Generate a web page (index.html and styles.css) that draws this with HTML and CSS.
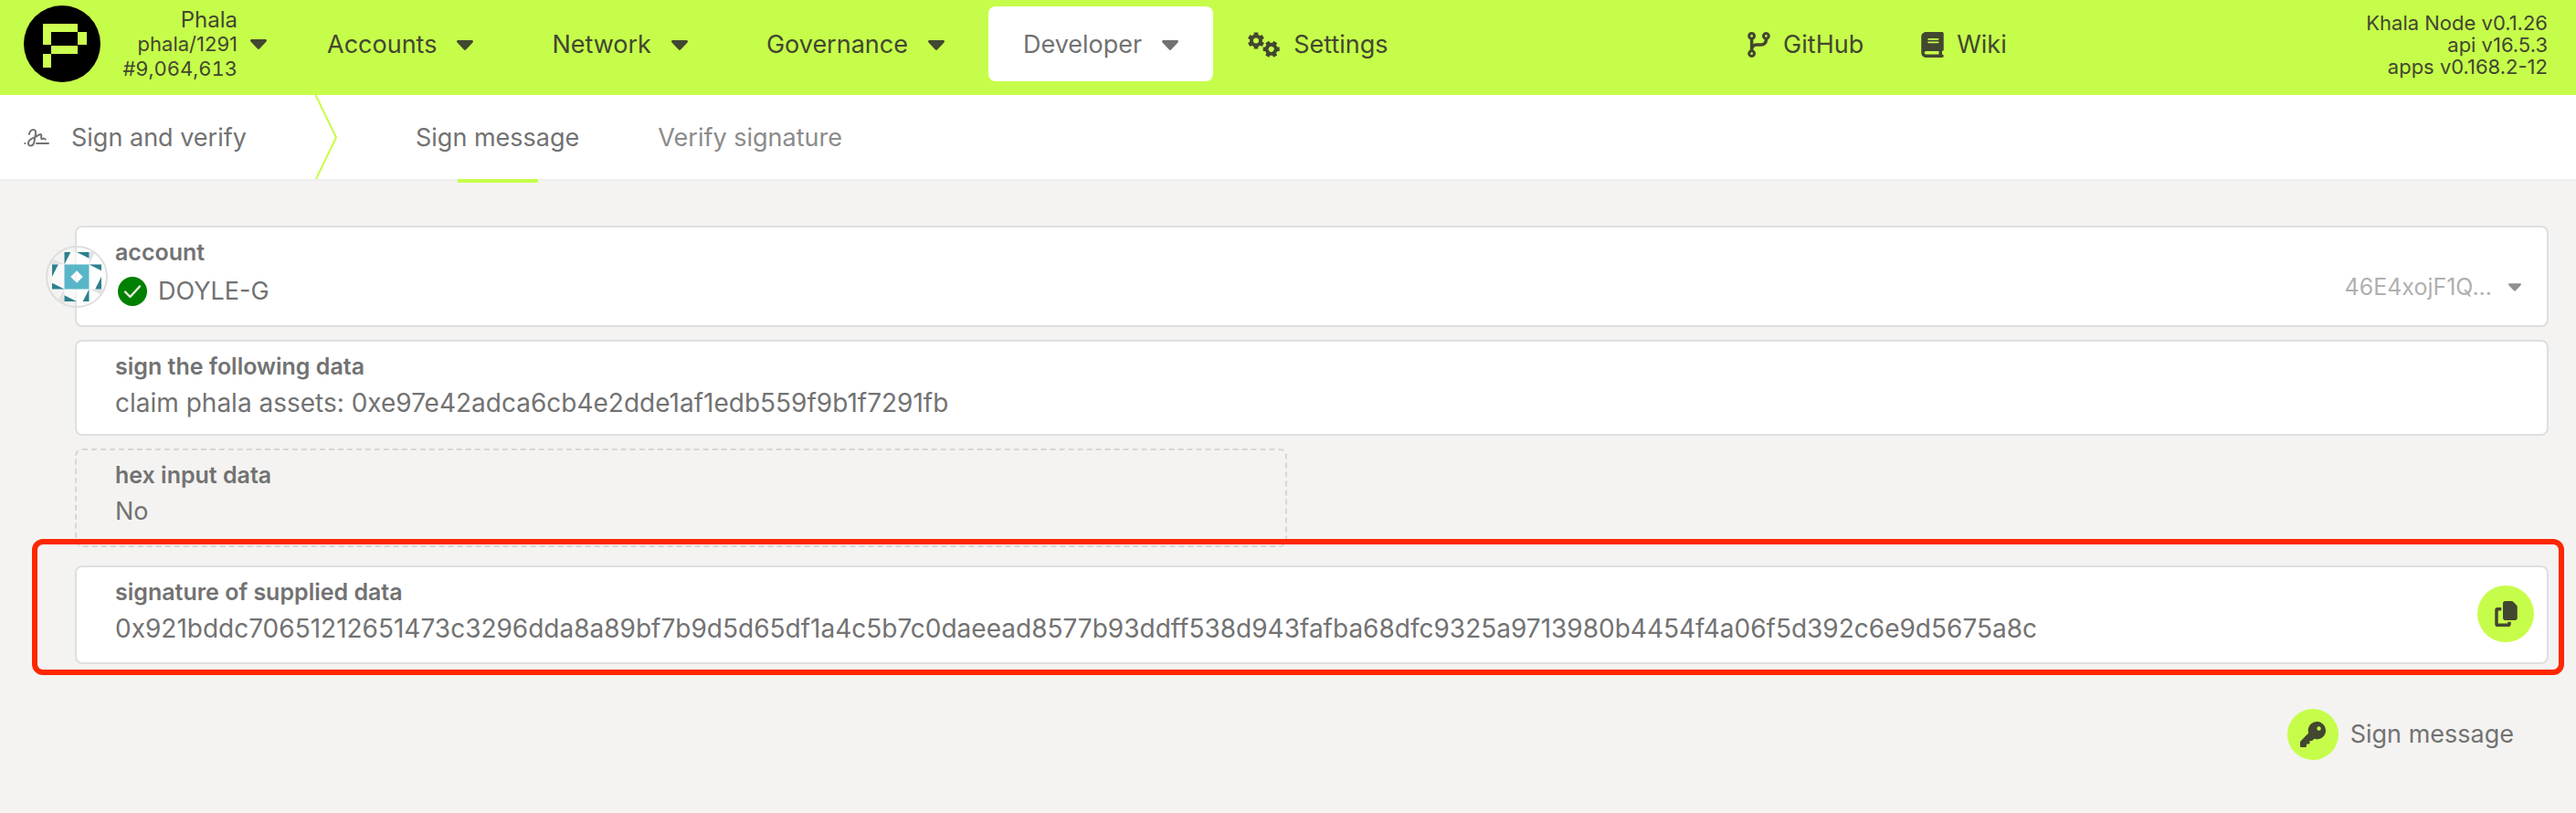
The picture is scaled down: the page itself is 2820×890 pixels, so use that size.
FILE: index.html
```html
<!DOCTYPE html>
<html lang="en">
<head>
<meta charset="utf-8">
<title>Sign and verify</title>
<link rel="stylesheet" href="styles.css">
</head>
<body>
<svg class="defs" aria-hidden="true">
  <symbol id="caret" viewBox="0 0 18 11"><path d="M1.5 0h15c1.3 0 2 1.500 1 2.500l-7.300 7.800a1.700 1.700 0 0 1-2.400 0L.5 2.500C-.5 1.500.2 0 1.500 0z"/></symbol>
</svg>
<header class="topbar">
  <div class="topbar-left">
    <button class="chain" type="button" aria-haspopup="true">
      <svg class="logo" viewBox="0 0 84 84" aria-hidden="true">
        <circle cx="42" cy="42" r="42"/>
        <path fill="#cdff50" d="M21 20h38v9H30v14h-9zM59 29h10v14H59zM30 44h29v9H30zM21 53h9v15h-9z"/>
      </svg>
      <span class="chain-info">
        <span class="chain-name">Phala</span>
        <span>phala/1291</span>
        <span class="block-number">#9,064,613</span>
      </span>
      <svg class="caret" aria-hidden="true"><use href="#caret"/></svg>
    </button>
    <nav class="menu">
      <button class="menu-item" type="button">Accounts<svg class="caret" aria-hidden="true"><use href="#caret"/></svg></button>
      <button class="menu-item" type="button">Network<svg class="caret" aria-hidden="true"><use href="#caret"/></svg></button>
      <button class="menu-item" type="button">Governance<svg class="caret" aria-hidden="true"><use href="#caret"/></svg></button>
      <button class="menu-item is-active" type="button">Developer<svg class="caret" aria-hidden="true"><use href="#caret"/></svg></button>
      <a class="menu-item menu-link" href="#settings">
        <svg class="gears" viewBox="0 0 35 28" aria-hidden="true">
          <g id="gear" transform="translate(9 9.500)" fill="none" stroke="currentColor">
            <circle r="5" stroke-width="4"/>
            <g stroke-width="4.600" stroke-linejoin="round">
              <path d="M0-5V-9"/><path d="M0-5V-9" transform="rotate(60)"/><path d="M0-5V-9" transform="rotate(120)"/>
              <path d="M0-5V-9" transform="rotate(180)"/><path d="M0-5V-9" transform="rotate(240)"/><path d="M0-5V-9" transform="rotate(300)"/>
            </g>
          </g>
          <g transform="translate(25.700 18.800) rotate(30)"><use href="#gear" x="-9" y="-9.500"/></g>
        </svg>
        Settings
      </a>
    </nav>
  </div>
  <nav class="links">
    <a class="link" href="#github">
      <svg class="icon" viewBox="0 0 448 512" aria-hidden="true"><path fill-rule="evenodd" d="M80 0a80 80 0 0 1 32 153.300v87.800c18.800-10.900 40.700-17.100 64-17.100h96c35.300 0 64-28.700 64-64v-6.700a80 80 0 1 1 64 0V160c0 70.700-57.300 128-128 128h-96c-35.300 0-64 28.700-64 64v6.700a80 80 0 1 1-64 0V153.300A80 80 0 0 1 80 0zm0 104a24 24 0 1 0 0-48 24 24 0 1 0 0 48zm288 0a24 24 0 1 0 0-48 24 24 0 1 0 0 48zM80 456a24 24 0 1 0 0-48 24 24 0 1 0 0 48z"/></svg>
      GitHub
    </a>
    <a class="link" href="#wiki">
      <svg class="icon" viewBox="0 0 448 512" aria-hidden="true"><path d="M96 0C43 0 0 43 0 96V416c0 53 43 96 96 96H384h32c17.700 0 32-14.300 32-32s-14.300-32-32-32V384c17.700 0 32-14.300 32-32V32c0-17.700-14.300-32-32-32H384 96zm0 384H352v64H96c-17.700 0-32-14.300-32-32s14.300-32 32-32zm32-240c0-8.800 7.200-16 16-16H336c8.800 0 16 7.200 16 16s-7.200 16-16 16H144c-8.800 0-16-7.200-16-16zm16 48H336c8.800 0 16 7.200 16 16s-7.200 16-16 16H144c-8.800 0-16-7.200-16-16s7.200-16 16-16z"/></svg>
      Wiki
    </a>
  </nav>
  <div class="versions">
    <span>Khala Node v0.1.26</span>
    <span>api v16.5.3</span>
    <span>apps v0.168.2-12</span>
  </div>
</header>

<div class="tabs">
  <div class="section">
    <svg class="signature outline" viewBox="0 0 28 20" aria-hidden="true">
      <path d="M1.200 16h.2M14 16h13M6 6c0-3 2.500-5 4.500-5s3 1.700 2.500 4.500L11.500 14c-.5 3-2 4.600-4 4.600S4.600 17 5 15c.5-3.500 5-4.500 8-6.200 2-1.200 4-2.800 5.500-2.800 1.700 0-.3 5 1.300 5.200.9.100 1.200-.6 2-.6s.7.800 2 .8"/>
    </svg>
    Sign and verify
  </div>
  <svg class="chevron outline" viewBox="0 0 24 92" aria-hidden="true"><path d="M1 1l22 45.500L1 92"/></svg>
  <nav class="tab-list">
    <a class="tab is-active" href="#sign">Sign message</a>
    <a class="tab" href="#verify">Verify signature</a>
  </nav>
</div>

<main class="page">
  <div class="field field-account">
    <svg class="avatar" viewBox="0 0 68 68" aria-hidden="true">
      <clipPath id="disc"><circle cx="34" cy="34" r="32"/></clipPath>
      <g clip-path="url(#disc)">
        <path fill="#e3e3e3" d="M20.500 20.500L2 11v9.500zM47.500 20.500V7L55 5zM20.500 47.500V63l-8-2zM47.500 47.500H66V56z"/>
        <path fill="#fff" fill-opacity=".6" d="M20.500 7h27v13.500H61v27H47.500V61h-27V47.500H7v-27h13.500z"/>
        <path fill="#2c808e" d="M20.500 7h6.800l-6.800 13.500zM34 7h13.500v6.800zM7 20.500h6.800L7 34zM7 40.700v6.800h13.500zM47.500 20.500H61v6.800zM61 34v13.500h-6.800zM20.500 54.200V61H34zM47.500 47.500V61h-6.800z"/>
        <path fill="#59b5c8" fill-rule="evenodd" d="M20.500 20.500h27v27h-27zM34 27.300L27.300 34l6.700 6.700 6.700-6.700z"/>
      </g>
      <circle cx="34" cy="34" r="33" fill="none" stroke="#dedede" stroke-width="2"/>
    </svg>
    <label class="label" for="account">account</label>
    <div class="account-row">
      <svg class="check" viewBox="0 0 32 32" aria-hidden="true"><circle cx="16" cy="16" r="16" fill="#008000"/><path d="M8 16.500l5.500 5.500L24 10.500" fill="none" stroke="#e8efe4" stroke-width="2.400" stroke-linecap="round" stroke-linejoin="round"/></svg>
      <select class="value account-select" id="account"><option>DOYLE-G</option></select>
      <span class="address">46E4xojF1Q...<svg class="caret caret-small" aria-hidden="true"><use href="#caret"/></svg></span>
    </div>
  </div>
  <div class="field">
    <label class="label" for="data">sign the following data</label>
    <input class="value" id="data" type="text" value="claim phala assets: 0xe97e42adca6cb4e2dde1af1edb559f9b1f7291fb">
  </div>
  <div class="field field-static">
    <label class="label" for="hex">hex input data</label>
    <output class="value" id="hex">No</output>
  </div>
  <div class="field field-signature">
    <div class="signature-text">
      <label class="label" for="signature">signature of supplied data</label>
      <input class="value" id="signature" type="text" readonly value="0x921bddc70651212651473c3296dda8a89bf7b9d5d65df1a4c5b7c0daeead8577b93ddff538d943fafba68dfc9325a9713980b4454f4a06f5d392c6e9d5675a8c">
    </div>
    <button class="round copy" type="button" aria-label="Copy signature">
      <svg class="icon" viewBox="0 0 448 512" aria-hidden="true"><path d="M208 0H332.100c12.700 0 24.900 5.100 33.900 14.100l67.900 67.900c9 9 14.100 21.200 14.100 33.900V336c0 26.500-21.500 48-48 48H208c-26.500 0-48-21.500-48-48V48c0-26.500 21.500-48 48-48zM48 128h80v64H64V448H256V416h64v48c0 26.500-21.500 48-48 48H48c-26.500 0-48-21.500-48-48V176c0-26.500 21.500-48 48-48z"/></svg>
    </button>
  </div>
  <div class="actions">
    <button class="action" type="button">
      <span class="round">
        <svg class="key" viewBox="0 0 512 512" aria-hidden="true"><path fill-rule="evenodd" d="M336 352c97.200 0 176-78.800 176-176S433.200 0 336 0S160 78.800 160 176c0 18.700 2.900 36.800 8.300 53.700L7 391c-4.500 4.500-7 10.600-7 17v80c0 13.300 10.700 24 24 24h80c13.300 0 24-10.700 24-24V448h40c13.300 0 24-10.700 24-24V384h40c6.400 0 12.500-2.500 17-7l33.300-33.300c16.900 5.400 35 8.300 53.700 8.300zM376 96a40 40 0 1 1 0 80 40 40 0 1 1 0-80z"/></svg>
      </span>
      Sign message
    </button>
  </div>
</main>
</body>
</html>
```
FILE: styles.css
```css
:root {
  --accent: #c6fd4a;
  --ink: #424730;
  --text: #727272;
  --line: #dedfdf;
  --bg: #f4f3f1;
}

* { box-sizing: border-box; }

body {
  margin: 0;
  background: var(--bg);
  color: var(--text);
  font-family: Inter, "Liberation Sans", sans-serif;
  font-size: 27px;
  line-height: 36px;
}

button, input, select {
  margin: 0;
  padding: 0;
  border: 0;
  background: none;
  color: inherit;
  font: inherit;
}

a { color: inherit; text-decoration: none; }
svg { display: block; flex: none; fill: currentColor; }
.defs { position: absolute; width: 0; height: 0; }
.outline { fill: none; stroke-linecap: round; stroke-linejoin: round; }

.icon { width: 25px; height: 28px; }
.caret { width: 18px; height: 11px; }

/* Top bar */
.topbar {
  display: flex;
  align-items: center;
  justify-content: space-between;
  padding: 6px 31px 14px 26px;
  background: var(--accent);
  color: var(--ink);
}
.topbar-left, .menu, .links { display: flex; align-items: center; }
.chain {
  display: flex;
  align-items: center;
  width: 266px;
  font-size: 22px;
  line-height: 27px;
}
.logo { width: 84px; height: 84px; fill: #000; }
.chain-info {
  display: flex;
  flex: 1;
  flex-direction: column;
  margin-right: 14px;
  text-align: right;
}
.chain-name { font-size: 24px; }
.block-number { font-variant-numeric: tabular-nums; }

.menu { gap: 10px; margin-left: 28px; }
.menu-item {
  display: flex;
  align-items: center;
  gap: 22px;
  height: 82px;
  padding: 2px 38px 0;
  border-radius: 8px;
}
.menu-item.is-active { background: #fff; color: var(--text); }
.menu-link { gap: 15px; padding: 2px 0 0 28px; }
.gears { width: 35px; height: 28px; }

.links { gap: 63px; }
.link { display: flex; align-items: center; gap: 14px; padding-top: 2px; }

.versions {
  display: flex;
  flex-direction: column;
  padding-top: 2px;
  font-size: 22px;
  line-height: 24px;
  text-align: right;
}

/* Section title and tabs */
.tabs {
  display: flex;
  align-items: stretch;
  height: 94px;
  border-bottom: 2px solid #eee;
  background: #fff;
}
.section {
  display: flex;
  align-items: center;
  gap: 24px;
  width: 345px;
  padding-top: 1px;
  padding-left: 26px;
}
.signature { width: 28px; height: 20px; stroke: currentColor; stroke-width: 2; }
.chevron { width: 24px; height: 92px; stroke: var(--accent); stroke-width: 2; }
.tab-list { display: flex; margin-left: 43px; }
.tab {
  display: flex;
  align-items: center;
  position: relative;
  padding: 2px 43px 0;
  color: #8b8b8b;
}
.tab.is-active { color: var(--text); }
.tab.is-active::after {
  content: "";
  position: absolute;
  bottom: -4px;
  left: 50%;
  width: 88px;
  height: 4px;
  margin-left: -44px;
  background: var(--accent);
}

/* Form */
.page {
  display: flex;
  flex-direction: column;
  gap: 14px;
  padding: 49px 30px 58px 82px;
}
.field {
  position: relative;
  padding: 11px 42px 10px;
  border: 2px solid var(--line);
  border-radius: 8px;
  background: #fff;
}
.label {
  display: block;
  font-size: 25px;
  font-weight: 600;
  line-height: 32px;
}
.value { display: block; width: 100%; height: 48px; line-height: 48px; }
input.value { font-size: 28px; }

.field-account { padding-bottom: 11px; }
.avatar { position: absolute; top: 20px; left: -34px; width: 68px; height: 68px; }
.account-row { display: flex; align-items: center; height: 53px; margin-right: -14px; padding-left: 3px; }
.check { width: 32px; height: 32px; margin-right: 12px; }
.account-select { flex: 1; width: auto; appearance: none; }
.address {
  display: flex;
  align-items: center;
  align-self: flex-start;
  gap: 18px;
  color: #b0b0b0;
  font-size: 25px;
  line-height: 44px;
}
.caret-small { width: 14px; height: 9px; color: #909090; }

.field-static {
  width: 49%;
  padding-bottom: 13px;
  border: 2px dashed #d6d6d5;
  background: none;
}

.field-signature {
  display: flex;
  align-items: center;
  margin-top: 6px;
  padding-right: 14px;
  padding-bottom: 13px;
}
.field-signature::after {
  content: "";
  position: absolute;
  inset: -31px -19px -14px -49px;
  border: 6px solid #ff2600;
  border-radius: 12px;
  pointer-events: none;
}
.signature-text { flex: 1; }
.round {
  display: flex;
  align-items: center;
  justify-content: center;
  width: 56px;
  height: 56px;
  border-radius: 50%;
  background: var(--accent);
  color: var(--ink);
}
.copy { width: 62px; height: 62px; }
.key { width: 28px; height: 28px; }

.actions { display: flex; justify-content: flex-end; margin-top: 35px; padding-right: 38px; }
.action { display: flex; align-items: center; gap: 13px; }
```
